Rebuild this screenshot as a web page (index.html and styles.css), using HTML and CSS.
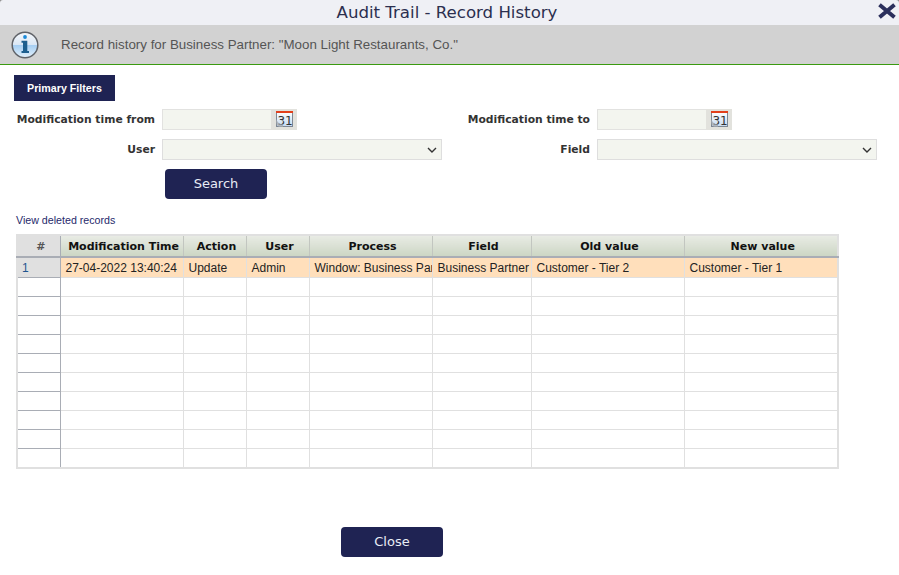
FILE: index.html
```html
<!DOCTYPE html>
<html>
<head>
    <title>Audit Trail - Record History</title>
    <link rel="stylesheet" href="styles.css">
</head>

<body>
    <div class="title-bar">
        <h1>Audit Trail - Record History</h1>
        <svg class="close-icon" width="20" height="16" viewBox="0 0 20 16">
            <path d="M2.5 1.8 L17.5 14.2 M17.5 1.8 L2.5 14.2" stroke="#2b2f5c" stroke-width="4" fill="none"/>
        </svg>
    </div>

    <div class="info-bar">
        <svg class="info-icon" width="28" height="28" viewBox="0 0 28 28">
            <defs>
                <linearGradient id="infoFill" x1="0" y1="0" x2="0" y2="1">
                    <stop offset="0" stop-color="#f6f8fb"/>
                    <stop offset="0.48" stop-color="#dbe8f5"/>
                    <stop offset="0.52" stop-color="#a6cff3"/>
                    <stop offset="1" stop-color="#e4f1fb"/>
                </linearGradient>
            </defs>
            <circle cx="14" cy="14" r="12.8" fill="url(#infoFill)" stroke="#5f6268" stroke-width="1.5"/>
            <circle cx="14" cy="6" r="1.9" fill="#1c8ad8"/>
            <path d="M10.5 9.8 H16.3 V20 H18 V22 H10.5 V20 H12 V11.8 H10.5 Z" fill="#1d5f8f"/>
        </svg>
        <p>Record history for Business Partner: "Moon Light Restaurants, Co."</p>
    </div>

    <div class="content">
        <div class="tab">Primary Filters</div>

        <form class="filters">
            <label>Modification time from</label>
            <div class="date-field">
                <input type="text">
                <span class="date-btn">
                    <svg width="17" height="16" viewBox="0 0 17 16">
                        <defs>
                            <linearGradient id="calFill" x1="0" y1="0" x2="0" y2="1">
                                <stop offset="0" stop-color="#ffffff"/>
                                <stop offset="1" stop-color="#c4d9f2"/>
                            </linearGradient>
                        </defs>
                        <rect x="0.5" y="1" width="16" height="14.5" fill="url(#calFill)" stroke="#7d8793"/>
                        <rect x="0" y="0" width="17" height="2" fill="#e2401c"/>
                        <text x="1.4" y="14" class="cal-day">31</text>
                        <path class="cal-curl" d="M0 8 Q2 13 7 13.5 L7 16 L3 16 Q0 14 0 11 Z"/>
                    </svg>
                </span>
            </div>
            <label>Modification time to</label>
            <div class="date-field">
                <input type="text">
                <span class="date-btn">
                    <svg width="17" height="16" viewBox="0 0 17 16">
                        <rect x="0.5" y="1" width="16" height="14.5" fill="url(#calFill)" stroke="#7d8793"/>
                        <rect x="0" y="0" width="17" height="2" fill="#e2401c"/>
                        <text x="1.4" y="14" class="cal-day">31</text>
                        <path class="cal-curl" d="M0 8 Q2 13 7 13.5 L7 16 L3 16 Q0 14 0 11 Z"/>
                    </svg>
                </span>
            </div>

            <label>User</label>
            <div class="select-field">
                <svg width="10" height="6" viewBox="0 0 10 6"><path d="M1 1 L5 5 L9 1" stroke="#333" stroke-width="1.4" fill="none"/></svg>
            </div>
            <label>Field</label>
            <div class="select-field">
                <svg width="10" height="6" viewBox="0 0 10 6"><path d="M1 1 L5 5 L9 1" stroke="#333" stroke-width="1.4" fill="none"/></svg>
            </div>
        </form>

        <button type="button" class="btn search-btn">Search</button>

        <a class="deleted-link">View deleted records</a>

        <table class="grid">
            <colgroup>
                <col class="c-num"><col class="c-time"><col class="c-action"><col class="c-user">
                <col class="c-process"><col class="c-field"><col class="c-old"><col class="c-new">
            </colgroup>
            <thead>
                <tr>
                    <th class="num">#</th>
                    <th>Modification Time</th>
                    <th>Action</th>
                    <th>User</th>
                    <th>Process</th>
                    <th>Field</th>
                    <th>Old value</th>
                    <th>New value</th>
                </tr>
            </thead>
            <tbody>
                <tr class="selected">
                    <td class="num">1</td>
                    <td>27-04-2022 13:40:24</td>
                    <td>Update</td>
                    <td>Admin</td>
                    <td>Window: Business Partner</td>
                    <td>Business Partner</td>
                    <td>Customer - Tier 2</td>
                    <td>Customer - Tier 1</td>
                </tr>
                <tr><td class="num"></td><td></td><td></td><td></td><td></td><td></td><td></td><td></td></tr>
                <tr><td class="num"></td><td></td><td></td><td></td><td></td><td></td><td></td><td></td></tr>
                <tr><td class="num"></td><td></td><td></td><td></td><td></td><td></td><td></td><td></td></tr>
                <tr><td class="num"></td><td></td><td></td><td></td><td></td><td></td><td></td><td></td></tr>
                <tr><td class="num"></td><td></td><td></td><td></td><td></td><td></td><td></td><td></td></tr>
                <tr><td class="num"></td><td></td><td></td><td></td><td></td><td></td><td></td><td></td></tr>
                <tr><td class="num"></td><td></td><td></td><td></td><td></td><td></td><td></td><td></td></tr>
                <tr><td class="num"></td><td></td><td></td><td></td><td></td><td></td><td></td><td></td></tr>
                <tr><td class="num"></td><td></td><td></td><td></td><td></td><td></td><td></td><td></td></tr>
                <tr><td class="num"></td><td></td><td></td><td></td><td></td><td></td><td></td><td></td></tr>
            </tbody>
        </table>

        <div class="footer">
            <button type="button" class="btn">Close</button>
        </div>
    </div>
</body>
</html>
```

FILE: styles.css
```css
html, body {
    margin: 0;
    height: 100%;
    overflow: hidden;
}

body {
    background: #8c8c8c;
    font-family: "Liberation Sans", Arial, sans-serif;
    font-size: 12px;
    color: #333;
    display: flex;
    flex-direction: column;
}

.title-bar {
    height: 25px;
    flex: none;
    background: #eff0f5;
    border-radius: 3px 3px 0 0;
    display: flex;
    align-items: center;
    justify-content: center;
    position: relative;
}

.title-bar h1 {
    margin: 0 0 0 -5px;
    font-family: "DejaVu Sans", sans-serif;
    font-size: 16.6px;
    font-weight: normal;
    color: #2b2f4f;
}

.close-icon {
    position: absolute;
    right: 2px;
    top: 3px;
}

.info-bar {
    height: 39px;
    flex: none;
    background: #d2d2d2;
    border-bottom: 1px solid #3a9a10;
    display: flex;
    align-items: center;
    padding-left: 11px;
}

.info-bar p {
    margin: 0 0 0 22px;
    font-size: 13.33px;
    color: #555;
}

.content {
    flex: 1;
    background: #fff;
    padding: 10px 14px 0;
}

.tab {
    width: 101px;
    height: 26px;
    line-height: 26px;
    background: #1f2353;
    color: #fff;
    font-size: 10.7px;
    font-weight: bold;
    text-align: center;
}

.filters {
    display: grid;
    grid-template-columns: 141px 280px 141px 280px;
    column-gap: 7px;
    row-gap: 9px;
    margin-top: 8px;
    align-items: center;
}

.filters label {
    font-family: "DejaVu Sans", sans-serif;
    font-size: 10.75px;
    font-weight: bold;
    color: #333;
    text-align: right;
    white-space: nowrap;
}

.date-field {
    display: flex;
    height: 21px;
}

.date-field input {
    width: 109px;
    height: 21px;
    box-sizing: border-box;
    margin: 0;
    padding: 0;
    background: #f3f5ef;
    border: 1px solid #e2e2e0;
    border-right: none;
    outline: none;
}

.date-btn {
    width: 26px;
    height: 21px;
    box-sizing: border-box;
    padding: 2px 0 0 5px;
    background: #e2e2dd;
    display: flex;
    align-items: flex-start;
}

.cal-day {
    font-family: "DejaVu Sans", sans-serif;
    font-size: 12px;
    fill: #333;
}

.cal-curl {
    fill: #a4a9b0;
    opacity: 0.75;
}

.select-field {
    height: 21px;
    box-sizing: border-box;
    background: #f3f5ef;
    border: 1px solid #dedede;
    display: flex;
    align-items: center;
    justify-content: flex-end;
    padding-right: 4px;
}

.btn {
    width: 102px;
    height: 30px;
    padding: 0 0 2px;
    background: #1f2353;
    color: #e8ecf5;
    border: none;
    border-radius: 4px;
    font-family: "DejaVu Sans", sans-serif;
    font-size: 13px;
}

.search-btn {
    display: block;
    margin: 9px 0 0 151px;
}

.deleted-link {
    display: block;
    margin: 15px 0 0 2px;
    font-size: 10.67px;
    color: #1f2a6b;
    line-height: 12px;
}

.grid {
    margin: 8px 0 0 2px;
    width: 823px;
    table-layout: fixed;
    border-collapse: collapse;
    border: 2px solid #e0e0e0;
}

.c-num { width: 43px; }
.c-time { width: 123px; }
.c-action { width: 63px; }
.c-user { width: 63px; }
.c-process { width: 123px; }
.c-field { width: 99px; }
.c-old { width: 153px; }
.c-new { width: 154px; }

.grid th {
    height: 20px;
    padding: 0 0 0 4px;
    background: linear-gradient(#e8ebe4, #ccd6c4);
    border-left: 1px solid #c2c6c0;
    border-bottom: 2px solid #a9adb5;
    font-family: "DejaVu Sans", sans-serif;
    font-size: 11px;
    font-weight: bold;
    color: #111;
    text-align: center;
    white-space: nowrap;
    overflow: hidden;
}

.grid td {
    height: 18px;
    padding: 0 0 0 5px;
    border-left: 1px solid #e0e0e0;
    border-bottom: 1px solid #e0e0e0;
    font-size: 12px;
    color: #222;
    white-space: nowrap;
    overflow: hidden;
}

.grid th.num {
    background: #e0e0e0;
    color: #555;
    border-left: none;
    border-right: 1px solid #a9adb5;
}

.grid td.num {
    border-left: none;
    border-right: 1px solid #a9adb5;
    border-bottom-color: #a9adb5;
    padding-left: 4px;
    color: #1f5590;
}

.selected td {
    background: #ffdfbb;
    height: 19px;
}

.selected td.num {
    background: #e0e0e0;
}

.footer {
    margin: 58px 0 0 327px;
}
```
